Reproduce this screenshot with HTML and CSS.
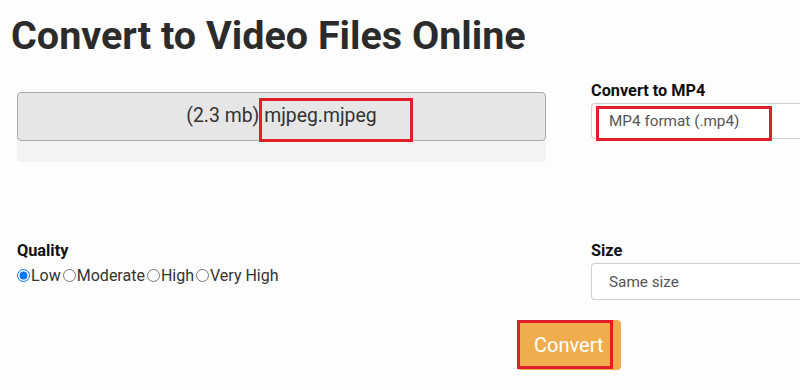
FILE: index.html
```html
<!DOCTYPE html>
<html lang="en">
<head>
<meta charset="utf-8">
<title>Convert to Video Files Online</title>
<link rel="stylesheet" href="styles.css">
</head>
<body>
<div class="page">
  <h1 class="title">Convert to Video Files Online</h1>
  <div class="row row-top">
    <div class="col-left file-col">
      <div class="file-box">
        <span class="file-text">(2.3 mb) mjpeg.mjpeg</span>
        <span class="mark mark-file"></span>
      </div>
      <div class="progress"></div>
    </div>
    <div class="col-right">
      <div class="label">Convert to MP4</div>
      <div class="select">
        <span>MP4 format (.mp4)</span>
        <span class="mark mark-format"></span>
      </div>
    </div>
  </div>
  <div class="row row-options">
    <div class="col-left">
      <div class="label">Quality</div>
      <div class="radios">
        <label class="radio"><input type="radio" name="q" checked>Low</label>
        <label class="radio"><input type="radio" name="q">Moderate</label>
        <label class="radio"><input type="radio" name="q">High</label>
        <label class="radio"><input type="radio" name="q">Very High</label>
      </div>
    </div>
    <div class="col-right">
      <div class="label">Size</div>
      <div class="select select-size"><span>Same size</span></div>
    </div>
  </div>
  <div class="actions">
    <button class="btn-convert" type="button">Convert<span class="mark mark-btn"></span></button>
  </div>
</div>
</body>
</html>
```

FILE: styles.css
```css
html, body {
  margin: 0;
  padding: 0;
  overflow: hidden;
}
body {
  background: #fdfdfd;
  font-family: Roboto, "Liberation Sans", Arial, sans-serif;
  color: #333;
  width: 800px;
  height: 390px;
}
.title {
  margin: 0;
  padding: 12px 0 0 11px;
  font-size: 39.5px;
  line-height: 48px;
  font-weight: 700;
  color: #2b2b2b;
}
.row {
  display: flex;
  gap: 45px;
  padding-left: 17px;
}
.row-top {
  margin-top: 20px;
}
.col-left {
  width: 529px;
  flex: none;
}
.col-right {
  width: 209px;
  flex: none;
}
.file-col {
  padding-top: 12px;
}
.file-box {
  position: relative;
  box-sizing: border-box;
  height: 49px;
  background: #e6e6e6;
  border: 1px solid #ababab;
  border-radius: 4px;
  display: flex;
  align-items: center;
  justify-content: center;
  font-size: 19.4px;
  color: #333;
}
.file-text {
  padding-bottom: 2px;
}
.progress {
  height: 21px;
  background: #f3f3f3;
  border-radius: 0 0 4px 4px;
}
.label {
  font-size: 16.3px;
  line-height: 21px;
  font-weight: 700;
  color: #111;
}
.select {
  position: relative;
  box-sizing: border-box;
  margin-top: 2px;
  height: 36px;
  background: #fff;
  border: 1px solid #d0d0d0;
  border-right: none;
  border-radius: 4px 0 0 4px;
  display: flex;
  align-items: center;
  padding-left: 17px;
  font-size: 15.3px;
  color: #555;
}
.select-size {
  height: 37px;
}
.mark {
  position: absolute;
  box-sizing: border-box;
  border: 3px solid #e21e2b;
  pointer-events: none;
}
.mark-file {
  left: 241px;
  top: 5px;
  width: 154px;
  height: 44px;
}
.mark-format {
  left: 4px;
  top: 2px;
  width: 176px;
  height: 35px;
}
.mark-btn {
  left: 0;
  top: 0;
  width: 96px;
  height: 49px;
}
.row-options {
  margin-top: 78px;
}
.radios {
  margin-top: 5px;
  display: flex;
  align-items: center;
  font-size: 16px;
  line-height: 19px;
  color: #333;
}
.radio {
  display: inline-flex;
  align-items: center;
  margin-right: 2px;
}
.radio input {
  margin: 0 1px 0 0;
  width: 13px;
  height: 13px;
}
.actions {
  margin-top: 20px;
  padding-left: 517px;
}
.btn-convert {
  position: relative;
  box-sizing: border-box;
  width: 104px;
  height: 50px;
  border: none;
  border-radius: 4px;
  background: #f0ad4e;
  color: #fff;
  font-family: Roboto, "Liberation Sans", Arial, sans-serif;
  font-size: 20px;
  text-align: left;
  padding: 0 0 0 17px;
  margin: 0;
}
```
